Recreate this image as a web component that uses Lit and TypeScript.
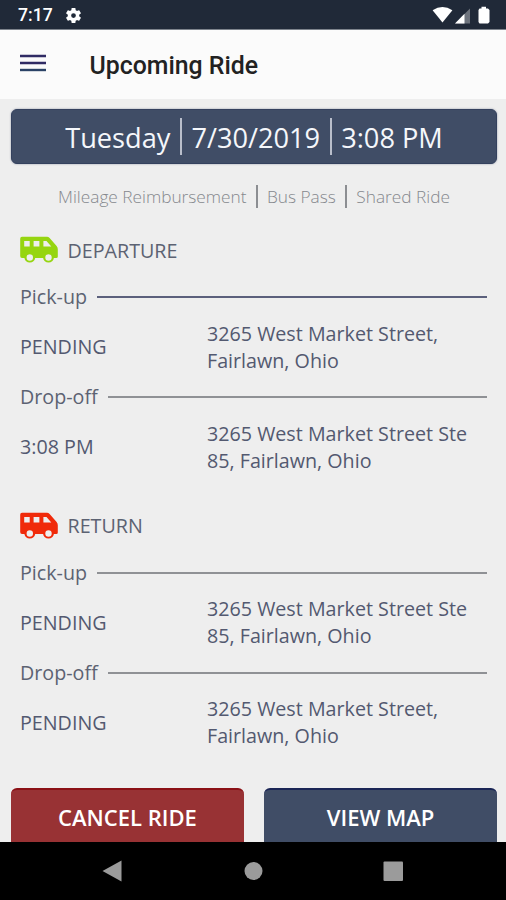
import { LitElement, html, css } from "lit";
import { customElement, property } from "lit/decorators.js";

interface Stop {
  label: string;
  time: string;
  address: string[];
  strong?: boolean;
}

@customElement("ride-leg")
class RideLeg extends LitElement {
  @property() heading = "";
  @property() tone = "green";
  @property({ attribute: false }) stops: Stop[] = [];

  static styles = css`
    :host { display: block; color: #5c6272; }
    .heading { display: flex; align-items: center; height: 40px; gap: 9px; margin-bottom: 12px; }
    .van { width: 39px; height: 28px; flex: none; }
    .green { fill: #96d510; }
    .red { fill: #f02a0a; }
    .title { font-size: 19.7px; margin-left: -0.5px; }
    .label { display: flex; align-items: center; height: 30px; gap: 10px; font-size: 19.7px; }
    .label span:first-child { margin-top: -1px; }
    .line { flex: 1; height: 2px; background: #8f9195; }
    .line.strong { background: #5b607c; }
    .row { display: grid; grid-template-columns: 187px 1fr; align-items: center; height: 70px; font-size: 19.7px; }
    .time { color: #535970; margin-top: -1px; }
    .address { line-height: 27px; color: #535970; white-space: nowrap; margin-top: -1px; }
  `;

  render() {
    return html`
      <div class="heading">
        <svg class="van ${this.tone}" viewBox="0 0 39 28">
          <path fill-rule="evenodd" d="M2 .7H27Q28.500 .7 29.600 1.900L36.600 9.900Q37.800 11.200 37.800 13.200V20.500Q37.800 22 36.300 22H33.900A5.500 5.500 0 0 1 23.100 22H15.200A5.500 5.500 0 0 1 4.400 22H2Q0.200 22 0.200 20V2.700Q0.200 .7 2 .7ZM4.200 4.900V10.600H9.700V4.900ZM13.600 4.900V10.600H19.400V4.900ZM23.400 4.900V10.600H31.300L26.500 4.900ZM9.800 18.300A3.200 3.200 0 1 0 9.800 24.700A3.200 3.200 0 1 0 9.800 18.300ZM28.500 18.300A3.200 3.200 0 1 0 28.500 24.700A3.200 3.200 0 1 0 28.500 18.300Z"/>
        </svg>
        <span class="title">${this.heading}</span>
      </div>
      ${this.stops.map((s) => html`
        <div class="label"><span>${s.label}</span><span class="line ${s.strong ? "strong" : ""}"></span></div>
        <div class="row">
          <span class="time">${s.time}</span>
          <span class="address">${s.address[0]}<br />${s.address[1]}</span>
        </div>`)}
    `;
  }
}

@customElement("app-root")
class AppRoot extends LitElement {
  static styles = css`
    :host { display: flex; flex-direction: column; width: 506px; height: 900px; overflow: hidden; background: #eeeeee; font-family: "Open Sans", "Noto Sans", sans-serif; }
    .status { box-sizing: border-box; height: 30px; flex: none; display: flex; align-items: center; padding: 1px 15px 0 18px; background: #202938; border-bottom: 1px solid #7d838c; color: #fff; font: 500 17.6px Roboto, sans-serif; }
    .gear { width: 19px; height: 19px; margin-left: 11.5px; }
    .signals { width: 60px; height: 20px; margin-left: auto; }
    .bar { height: 69px; flex: none; display: flex; align-items: center; padding: 0 20px; background: #fbfbfb; }
    .menu { width: 26px; height: 20px; margin-top: -3px; }
    .bar-title { margin: 0 0 0 43.5px; padding-top: 2px; color: #222; font: 500 24.85px Roboto, sans-serif; }
    .body { flex: 1; min-height: 0; overflow: hidden; padding: 10px 9px 0 11px; }
    .date { box-sizing: border-box; height: 55px; display: flex; align-items: center; justify-content: center; gap: 9.5px; border: 1px solid #34415e; border-radius: 6px; background: #404d66; color: #f5f7fb; font-size: 27.2px; box-shadow: 0 0 2px #8a90a0; }
    .date span { padding-top: 1px; }
    .rule { width: 2px; height: 37px; background: #b9becb; }
    .tags { display: flex; align-items: center; justify-content: center; gap: 9.5px; height: 64px; color: #85888d; font-size: 17.25px; font-weight: 300; }
    .tags .rule { height: 23px; margin-left: -0.5px; background: #8c8e92; }
    .legs { padding: 2px 10px 0 9px; }
    .second { margin-top: 23.5px; }
    .actions { display: grid; grid-template-columns: 1fr 1fr; gap: 20px; margin-top: 30.5px; }
    .btn { box-sizing: border-box; height: 60px; border: 0; border-top: 2px solid #1b2656; border-radius: 6px; background: #404d66; color: #fff; font: 600 22px/52px "Open Sans", sans-serif; text-align: center; padding: 0 0 4px; }
    .cancel { background: #983234; border-top-color: #8b1116; }
    .nav { height: 58px; flex: none; background: #000; }
  `;

  render() {
    return html`
      <div class="status">
        <span>7:17</span>
        <svg class="gear" viewBox="0 0 24 24" fill="#fff"><path d="M19.14 12.94c.04-.3.06-.61.06-.94s-.02-.64-.07-.94l2.03-1.58c.18-.14.23-.41.12-.61l-1.92-3.32c-.12-.22-.37-.29-.59-.22l-2.39.96c-.5-.38-1.03-.7-1.62-.94L14.4 2.81c-.04-.24-.24-.41-.48-.41h-3.84c-.24 0-.43.17-.47.41l-.36 2.54c-.59.24-1.13.57-1.62.94l-2.39-.96c-.22-.08-.47 0-.59.22L2.74 8.87c-.12.21-.08.47.12.61l2.03 1.58c-.05.3-.09.63-.09.94s.02.64.07.94l-2.03 1.58c-.18.14-.23.41-.12.61l1.92 3.32c.12.22.37.29.59.22l2.39-.96c.5.38 1.03.7 1.62.94l.36 2.54c.05.24.24.41.48.41h3.84c.24 0 .44-.17.47-.41l.36-2.54c.59-.24 1.13-.56 1.62-.94l2.39.96c.22.08.47 0 .59-.22l1.92-3.32c.12-.22.07-.47-.12-.61l-2.01-1.58zM12 15A3 3 0 1 1 12 9a3 3 0 0 1 0 6z"/></svg>
        <svg class="signals" viewBox="0 0 60 20" fill="#fff">
          <path d="M1.600 5.200Q11.500-1.400 21.400 5.200L11.500 17.400Z"/>
          <path d="M24 18.500L39 3.500V18.500Z" opacity=".35"/>
          <path d="M24 18.500L33.500 8.700V18.500Z"/>
          <path d="M48.500 3.500H50.500V1.800H55V3.500H57L58.500 5V17L57 18.500H48.500L47.500 17V5Z"/>
        </svg>
      </div>
      <div class="bar">
        <svg class="menu" viewBox="0 0 26 20"><path fill="#302b64" d="M0 1.800h26v2.400H0zM0 8.800h26v2.400H0z"/><path fill="#2b4266" d="M0 15.800h26v2.400H0z"/></svg>
        <h1 class="bar-title">Upcoming Ride</h1>
      </div>
      <div class="body">
        <div class="date"><span>Tuesday</span><i class="rule"></i><span>7/30/2019</span><i class="rule"></i><span>3:08 PM</span></div>
        <div class="tags"><span>Mileage Reimbursement</span><i class="rule"></i><span>Bus Pass</span><i class="rule"></i><span>Shared Ride</span></div>
        <div class="legs">
          <ride-leg heading="DEPARTURE" tone="green" .stops=${[
            { label: "Pick-up", time: "PENDING", address: ["3265 West Market Street,", "Fairlawn, Ohio"], strong: true },
            { label: "Drop-off", time: "3:08 PM", address: ["3265 West Market Street Ste", "85, Fairlawn, Ohio"] },
          ]}></ride-leg>
          <ride-leg class="second" heading="RETURN" tone="red" .stops=${[
            { label: "Pick-up", time: "PENDING", address: ["3265 West Market Street Ste", "85, Fairlawn, Ohio"] },
            { label: "Drop-off", time: "PENDING", address: ["3265 West Market Street,", "Fairlawn, Ohio"] },
          ]}></ride-leg>
        </div>
        <div class="actions">
          <button class="btn cancel">CANCEL RIDE</button>
          <button class="btn">VIEW MAP</button>
        </div>
      </div>
      <svg class="nav" viewBox="0 0 506 58" fill="#9b9b9b">
        <path d="M102.500 29L121.500 18.500V39.500Z"/>
        <circle cx="253.500" cy="29" r="9"/>
        <rect x="383.500" y="19.500" width="19.500" height="19.500" rx="1"/>
      </svg>
    `;
  }
}
